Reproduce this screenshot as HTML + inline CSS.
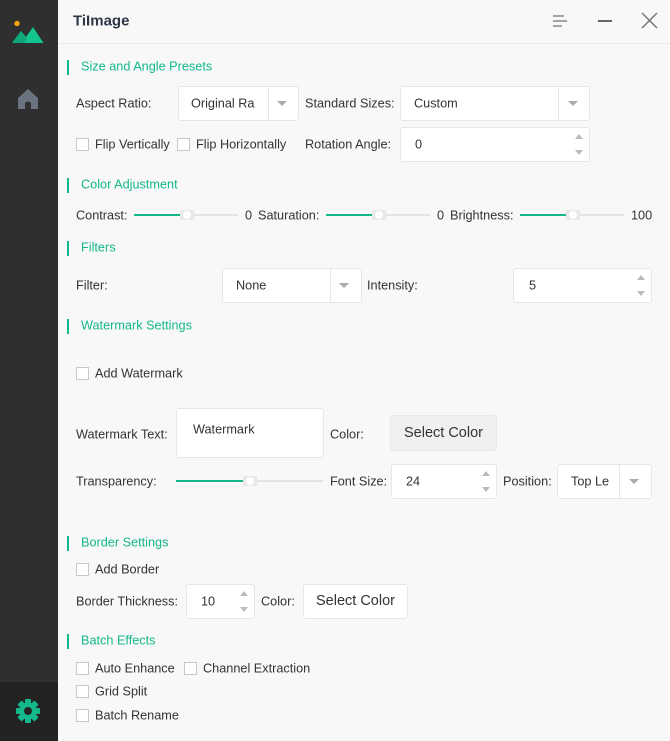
<!DOCTYPE html>
<html><head><meta charset="utf-8"><style>
*{margin:0;padding:0;box-sizing:border-box}
body{width:670px;height:741px;overflow:hidden;background:#f8f8f8;font-family:"Liberation Sans",sans-serif;font-size:12.7px;color:#333;position:relative}
.a{position:absolute;white-space:nowrap}
.t{position:absolute;white-space:nowrap;transform:translateY(-50%);line-height:1}
.h{position:absolute;left:67px;width:2px;height:15px;background:#13b88b}
.ht{position:absolute;left:81px;color:#13b88b;font-size:12.7px;transform:translateY(-50%);line-height:1;white-space:nowrap}
.box{position:absolute;background:#fff;border:1px solid #e6e6e6;border-radius:3px}
.div{position:absolute;top:0;bottom:0;width:1px;background:#e6e6e6}
.arr{position:absolute;width:0;height:0;border-left:5px solid transparent;border-right:5px solid transparent;border-top:5px solid #aaa}
.up{position:absolute;width:0;height:0;border-left:4px solid transparent;border-right:4px solid transparent;border-bottom:5px solid #bbb;right:6px;top:6px}
.dn{position:absolute;width:0;height:0;border-left:4px solid transparent;border-right:4px solid transparent;border-top:5px solid #bbb;right:6px;bottom:6px}
.cb{position:absolute;width:13px;height:13px;border:1px solid #c8c8c8;background:#fff}
.tr{position:absolute;height:2px;background:#e3e3e3}
.fl{position:absolute;height:2px;background:#13b88b}
.hd{position:absolute;width:14px;height:10px;background:#e8e8e8}
.hd:after{content:"";position:absolute;left:3px;top:1px;width:8px;height:8px;border-radius:50%;background:#fff}
</style></head><body>
<div class="a" style="left:0;top:0;width:58px;height:682px;background:#2f2f2f"></div>
<div class="a" style="left:0;top:682px;width:58px;height:59px;background:#232323"></div>
<svg class="a" style="left:0;top:0" width="58" height="50" viewBox="0 0 58 50"><circle cx="17" cy="23.5" r="2.7" fill="#f6a609"/><path d="M12 43 L21 31 L26 37 L33 27 L43.5 43 Z" fill="#13c48f"/><path d="M12 43 L21 31 L27 39 L24 43Z" fill="#0fa77a"/></svg>
<svg class="a" style="left:17px;top:88px" width="22" height="22" viewBox="0 0 22 22"><path d="M1 10 L11 1 L21 10 V21 H14 V15 Q11 12 8 15 V21 H1 Z" fill="#6b7280"/></svg>
<svg class="a" style="left:16px;top:699px" width="24" height="24" viewBox="0 0 24 24"><g fill="#13b88b"><rect x="9" y="0" width="6" height="24" rx="1"/><rect x="0" y="9" width="24" height="6" rx="1"/><rect x="9" y="0" width="6" height="24" rx="1" transform="rotate(45 12 12)"/><rect x="9" y="0" width="6" height="24" rx="1" transform="rotate(-45 12 12)"/><circle cx="12" cy="12" r="8.5"/></g><circle cx="12" cy="12" r="4" fill="#232323"/></svg>

<div class="a" style="left:58px;top:43px;width:612px;height:1px;background:#ececec"></div>
<div class="t" style="left:73px;top:21px;font-weight:bold;font-size:15px;color:#2d3748">TiImage</div>
<svg class="a" style="left:552px;top:14px" width="16" height="14"><path d="M1 2h11M1 7h14M1 12h9" stroke="#888" stroke-width="1.5"/></svg>
<div class="a" style="left:598px;top:20px;width:14px;height:2px;background:#666"></div>
<svg class="a" style="left:641px;top:12px" width="17" height="17"><path d="M1 1L16 16M16 1L1 16" stroke="#777" stroke-width="1.5"/></svg>

<div class="h" style="top:60px"></div><div class="ht" style="top:67px">Size and Angle Presets</div>
<div class="t" style="left:76px;top:104px">Aspect Ratio:</div>
<div class="box" style="left:178px;top:86px;width:121px;height:35px"><div class="div" style="left:89px"></div><div class="arr" style="left:98px;top:14px"></div><div class="t" style="left:12px;top:17px">Original Ra</div></div>
<div class="t" style="left:305px;top:104px">Standard Sizes:</div>
<div class="box" style="left:400px;top:86px;width:190px;height:35px"><div class="div" style="left:157px"></div><div class="arr" style="left:167px;top:14px"></div><div class="t" style="left:13px;top:17px">Custom</div></div>
<div class="cb" style="left:76px;top:138px"></div><div class="t" style="left:95px;top:145px">Flip Vertically</div>
<div class="cb" style="left:177px;top:138px"></div><div class="t" style="left:196px;top:145px">Flip Horizontally</div>
<div class="t" style="left:305px;top:145px">Rotation Angle:</div>
<div class="box" style="left:400px;top:127px;width:190px;height:35px"><div class="up"></div><div class="dn"></div><div class="t" style="left:14px;top:17px">0</div></div>

<div class="h" style="top:178px"></div><div class="ht" style="top:185px">Color Adjustment</div>
<div class="t" style="left:76px;top:216px">Contrast:</div>
<div class="tr" style="left:134px;top:214px;width:104px"></div><div class="fl" style="left:134px;top:214px;width:47px"></div><div class="hd" style="left:180px;top:210px"></div>
<div class="t" style="left:245px;top:216px">0</div>
<div class="t" style="left:258px;top:216px">Saturation:</div>
<div class="tr" style="left:326px;top:214px;width:104px"></div><div class="fl" style="left:326px;top:214px;width:47px"></div><div class="hd" style="left:372px;top:210px"></div>
<div class="t" style="left:437px;top:216px">0</div>
<div class="t" style="left:450px;top:216px">Brightness:</div>
<div class="tr" style="left:520px;top:214px;width:104px"></div><div class="fl" style="left:520px;top:214px;width:47px"></div><div class="hd" style="left:566px;top:210px"></div>
<div class="t" style="left:631px;top:216px">100</div>

<div class="h" style="top:241px"></div><div class="ht" style="top:248px">Filters</div>
<div class="t" style="left:76px;top:286px">Filter:</div>
<div class="box" style="left:222px;top:268px;width:140px;height:35px"><div class="div" style="left:107px"></div><div class="arr" style="left:116px;top:14px"></div><div class="t" style="left:13px;top:17px">None</div></div>
<div class="t" style="left:367px;top:286px">Intensity:</div>
<div class="box" style="left:513px;top:268px;width:139px;height:35px"><div class="up"></div><div class="dn"></div><div class="t" style="left:15px;top:17px">5</div></div>

<div class="h" style="top:319px"></div><div class="ht" style="top:326px">Watermark Settings</div>
<div class="cb" style="left:76px;top:367px"></div><div class="t" style="left:95px;top:374px">Add Watermark</div>
<div class="t" style="left:76px;top:435px">Watermark Text:</div>
<div class="box" style="left:176px;top:408px;width:148px;height:50px"><div class="t" style="left:16px;top:21px">Watermark</div></div>
<div class="t" style="left:330px;top:435px">Color:</div>
<div class="a" style="left:390px;top:415px;width:107px;height:36px;background:#f0f0f0;border:1px solid #e8e8e8;border-radius:3px;font-size:14.5px;line-height:34px;text-align:center">Select Color</div>
<div class="t" style="left:76px;top:482px">Transparency:</div>
<div class="tr" style="left:176px;top:480px;width:147px"></div><div class="fl" style="left:176px;top:480px;width:68px"></div><div class="hd" style="left:243px;top:476px"></div>
<div class="t" style="left:330px;top:482px">Font Size:</div>
<div class="box" style="left:391px;top:464px;width:106px;height:35px"><div class="up"></div><div class="dn"></div><div class="t" style="left:14px;top:17px">24</div></div>
<div class="t" style="left:503px;top:482px">Position:</div>
<div class="box" style="left:557px;top:464px;width:95px;height:35px"><div class="div" style="left:61px"></div><div class="arr" style="left:71px;top:14px"></div><div class="t" style="left:13px;top:17px">Top Le</div></div>

<div class="h" style="top:536px"></div><div class="ht" style="top:543px">Border Settings</div>
<div class="cb" style="left:76px;top:563px"></div><div class="t" style="left:95px;top:570px">Add Border</div>
<div class="t" style="left:76px;top:602px">Border Thickness:</div>
<div class="box" style="left:186px;top:584px;width:69px;height:35px"><div class="up"></div><div class="dn"></div><div class="t" style="left:14px;top:17px">10</div></div>
<div class="t" style="left:261px;top:602px">Color:</div>
<div class="a" style="left:303px;top:584px;width:105px;height:35px;background:#fff;border:1px solid #e6e6e6;border-radius:3px;font-size:14.5px;line-height:33px;text-align:center">Select Color</div>

<div class="h" style="top:634px"></div><div class="ht" style="top:641px">Batch Effects</div>
<div class="cb" style="left:76px;top:662px"></div><div class="t" style="left:95px;top:669px">Auto Enhance</div>
<div class="cb" style="left:184px;top:662px"></div><div class="t" style="left:203px;top:669px">Channel Extraction</div>
<div class="cb" style="left:76px;top:685px"></div><div class="t" style="left:95px;top:692px">Grid Split</div>
<div class="cb" style="left:76px;top:709px"></div><div class="t" style="left:95px;top:716px">Batch Rename</div>
</body></html>
